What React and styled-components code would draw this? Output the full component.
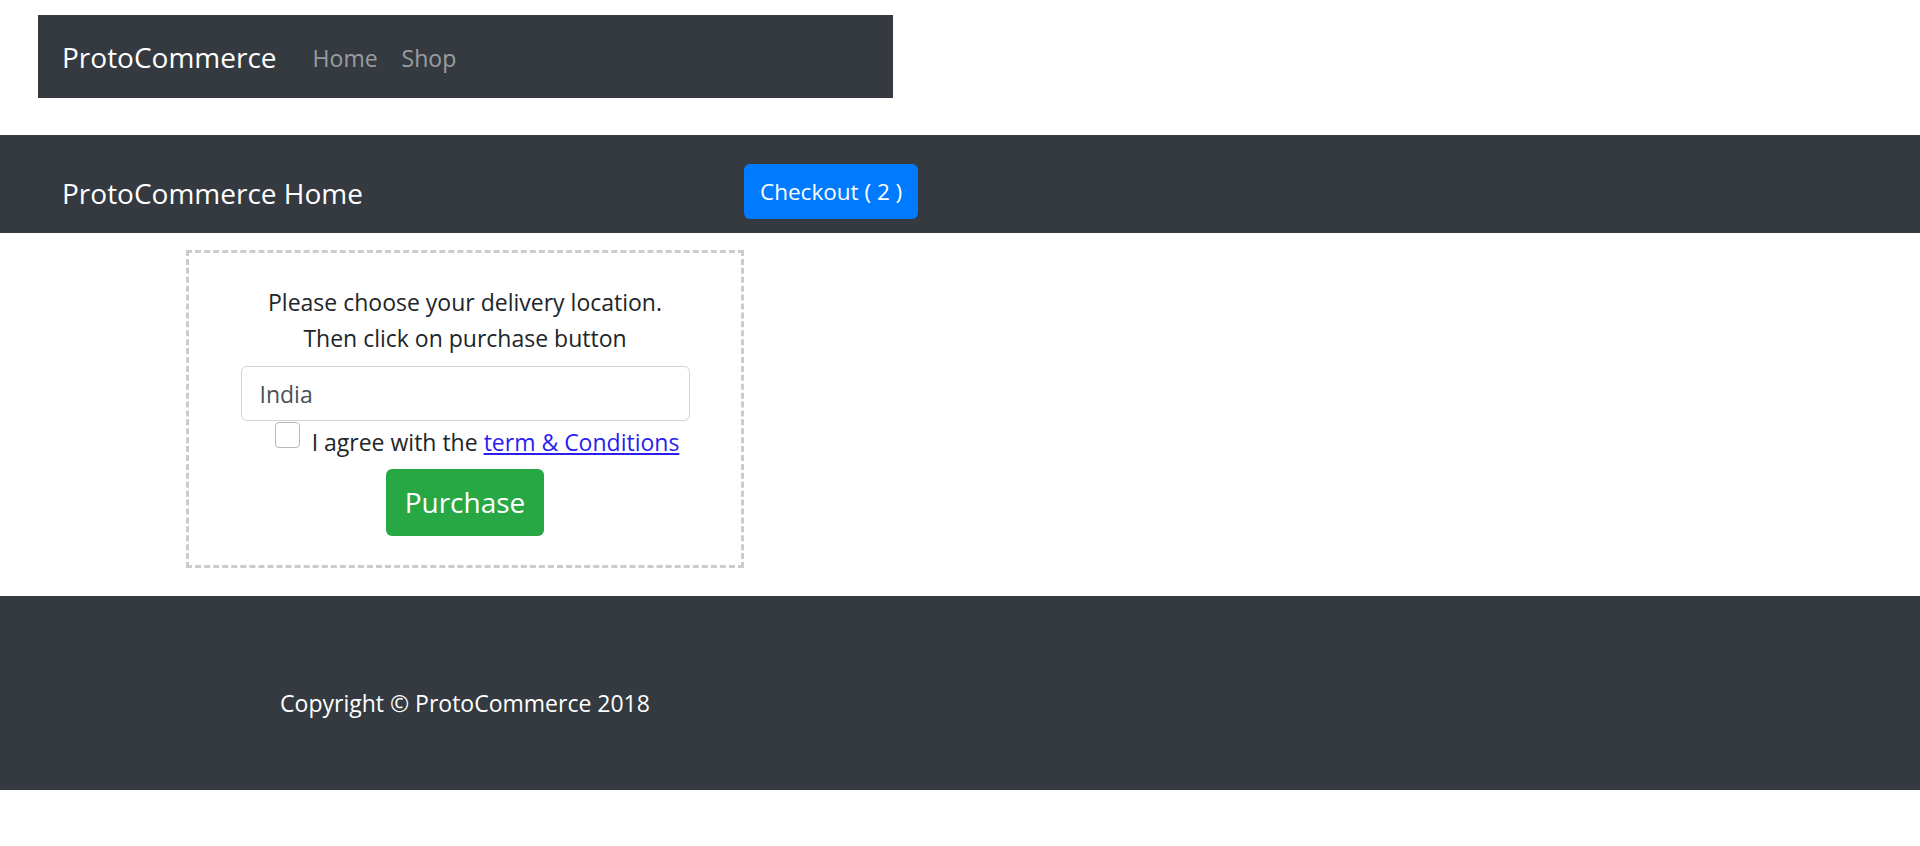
import styled, {createGlobalStyle} from "styled-components";

const GlobalStyle = createGlobalStyle`
    html, body {
        margin: 0;
        padding: 0;
        background: #fff;
        font-family: "Open Sans", "Noto Sans", "DejaVu Sans", sans-serif;
        color: #212529;
    }
`;

const Page = styled.div`
    width: 1920px;
    padding-top: 15px;
`;

const TopNav = styled.nav`
    margin-left: 38px;
    width: 855px;
    height: 83px;
    box-sizing: border-box;
    padding: 2px 24px 0;
    background-color: #343a40;
    display: flex;
    align-items: center;
`;

const Brand = styled.a`
    color: #fff;
    font-size: 28px;
    line-height: 45px;
    margin-right: 24px;
    text-decoration: none;
`;

const NavLink = styled.a`
    color: rgba(255, 255, 255, 0.5);
    font-size: 23px;
    line-height: 36px;
    padding: 0 12px;
    text-decoration: none;
`;

const HeaderBand = styled.header`
    margin-top: 37px;
    height: 98px;
    box-sizing: border-box;
    padding: 29px 0 0 62px;
    background-color: #343a40;
    display: grid;
    grid-template-columns: 682px auto;
    align-items: start;
`;

const HeaderTitle = styled.h1`
    margin: 0;
    padding-top: 7px;
    color: #fff;
    font-size: 28px;
    font-weight: 400;
    line-height: 45px;
`;

const CheckoutButton = styled.button`
    justify-self: start;
    height: 55px;
    padding: 1px 16px 0;
    border: none;
    border-radius: 6px;
    background-color: #007bff;
    color: #fff;
    font-family: inherit;
    font-size: 22.5px;
    line-height: 36px;
    cursor: pointer;
`;

const Main = styled.main`
    padding: 17px 0 0 186px;
`;

const DeliveryBox = styled.div`
    width: 558px;
    box-sizing: border-box;
    border: 3px dashed #ccc;
    padding: 31px 0 29px;
    text-align: center;
    display: flex;
    flex-direction: column;
    align-items: center;
`;

const Line = styled.p`
    margin: 0;
    font-size: 23px;
    line-height: 36px;
`;

const LocationInput = styled.input`
    margin-top: 10px;
    width: 449px;
    height: 55px;
    box-sizing: border-box;
    padding: 0 18px;
    border: 1px solid #ced4da;
    border-radius: 6px;
    color: #495057;
    font-family: inherit;
    font-size: 23px;
    outline: none;
`;

const AgreeRow = styled.label`
    display: flex;
    align-items: flex-start;
    gap: 12px;
    padding-left: 24px;
`;

const CheckBox = styled.input`
    appearance: none;
    margin: 1px 0 0;
    width: 25px;
    height: 26px;
    box-sizing: border-box;
    border: 1px solid #b8b8b8;
    border-radius: 4px;
    background: #fff;
`;

const AgreeText = styled.span`
    margin-top: 3px;
    font-size: 23px;
    line-height: 36px;

    & > a {
        color: #2a1ef0;
        text-decoration: underline;
    }
`;

const PurchaseButton = styled.button`
    margin-top: 9px;
    height: 67px;
    padding: 0 19px;
    border: none;
    border-radius: 6px;
    background-color: #28a745;
    color: #fff;
    font-family: inherit;
    font-size: 28px;
    line-height: 45px;
    cursor: pointer;
`;

const Footer = styled.footer`
    margin-top: 28px;
    height: 194px;
    box-sizing: border-box;
    padding: 89px 0 0 186px;
    background-color: #343a40;
`;

const FooterText = styled.p`
    margin: 0;
    width: 558px;
    text-align: center;
    color: #fff;
    font-size: 23px;
    line-height: 36px;
`;

export default function App() {
    return (
        <Page>
            <GlobalStyle/>
            <TopNav>
                <Brand href="#">ProtoCommerce</Brand>
                <NavLink href="#">Home</NavLink>
                <NavLink href="#">Shop</NavLink>
            </TopNav>

            <HeaderBand>
                <HeaderTitle>ProtoCommerce Home</HeaderTitle>
                <CheckoutButton>Checkout ( 2 )</CheckoutButton>
            </HeaderBand>

            <Main>
                <DeliveryBox>
                    <Line>Please choose your delivery location.</Line>
                    <Line>Then click on purchase button</Line>
                    <LocationInput defaultValue="India"/>
                    <AgreeRow>
                        <CheckBox type="checkbox"/>
                        <AgreeText>I agree with the <a href="#">term &amp; Conditions</a></AgreeText>
                    </AgreeRow>
                    <PurchaseButton>Purchase</PurchaseButton>
                </DeliveryBox>
            </Main>

            <Footer>
                <FooterText>Copyright © ProtoCommerce 2018</FooterText>
            </Footer>
        </Page>
    );
}
